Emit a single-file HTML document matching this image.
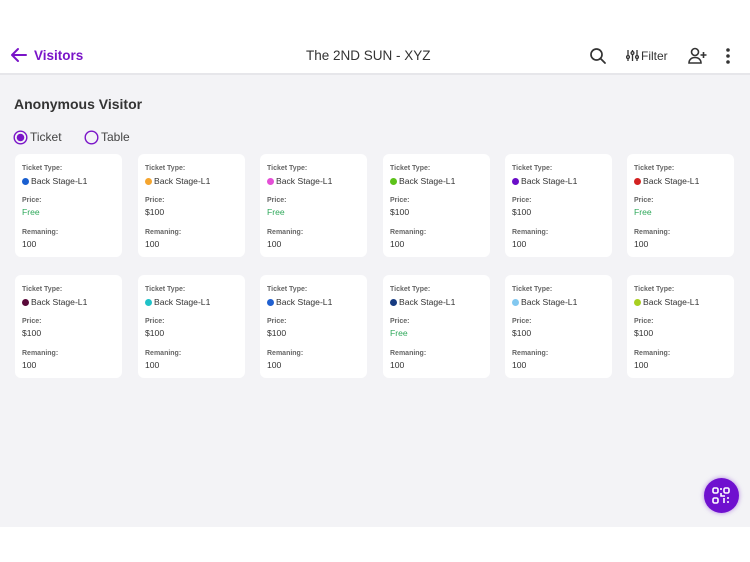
<!DOCTYPE html><html><head><style>
body{margin:0;width:750px;height:562px;position:relative;font-family:"Liberation Sans",sans-serif;background:#fff;overflow:hidden}
.hdr{position:absolute;left:0;top:0;width:750px;height:73px;background:#fff;border-bottom:2px solid #e6e6ea}
.main{position:absolute;left:0;top:75px;width:750px;height:452px;background:#f3f3f6}
.t{position:absolute;white-space:nowrap}
.card{position:absolute;width:107px;height:103px;background:#fff;border-radius:6px}
.card .l{position:absolute;left:7px;font-size:7px;font-weight:bold;color:#666}
.card .v{position:absolute;left:7px;font-size:8.6px;color:#333}
.dot{display:inline-block;width:7px;height:7px;border-radius:50%;margin-right:2px;vertical-align:-0.5px}
.free{color:#2ea85a!important}
</style></head><body>
<div class="hdr">
<svg style="position:absolute;left:10px;top:47px" width="18" height="16" viewBox="0 0 18 16"><path d="M16 8H2M8 2L2 8l6 6" stroke="#7a14c8" stroke-width="2" fill="none" stroke-linecap="round" stroke-linejoin="round"/></svg>
<div class="t" style="left:34px;top:48px;font-size:13.5px;font-weight:bold;color:#7a14c8">Visitors</div>
<div class="t" style="left:306px;top:48px;font-size:13.5px;color:#333">The 2ND SUN - XYZ</div>
<svg style="position:absolute;left:589px;top:47px" width="18" height="18" viewBox="0 0 18 18"><circle cx="7.5" cy="7.5" r="5.5" stroke="#333" stroke-width="1.7" fill="none"/><path d="M11.5 11.5L16 16" stroke="#333" stroke-width="1.8" stroke-linecap="round"/></svg>
<svg style="position:absolute;left:626px;top:49px" width="13" height="13" viewBox="0 0 13 13" stroke="#333" stroke-width="1.3" fill="none"><path d="M2 1v11M6.5 1v11M11 1v11"/><circle cx="2" cy="8" r="1.4" fill="#fff"/><circle cx="6.5" cy="4" r="1.4" fill="#fff"/><circle cx="11" cy="8" r="1.4" fill="#fff"/></svg>
<div class="t" style="left:641px;top:49px;font-size:12px;color:#333">Filter</div>
<svg style="position:absolute;left:688px;top:47px" width="19" height="18" viewBox="0 0 19 18" stroke="#333" stroke-width="1.6" fill="none"><circle cx="7" cy="5" r="3.5"/><path d="M1 16c0-3.5 2.7-5.5 6-5.5s6 2 6 5.5z"/><path d="M15.5 5v6M12.5 8h6"/></svg>
<svg style="position:absolute;left:725px;top:47px" width="6" height="18"><circle cx="3" cy="3" r="1.8" fill="#333"/><circle cx="3" cy="9" r="1.8" fill="#333"/><circle cx="3" cy="15" r="1.8" fill="#333"/></svg>
</div>
<div class="main"></div>
<div class="t" style="left:14px;top:96px;font-size:14px;font-weight:bold;color:#333">Anonymous Visitor</div>
<svg style="position:absolute;left:13px;top:130px" width="15" height="15"><circle cx="7.5" cy="7.5" r="6.3" stroke="#7a14c8" stroke-width="1.4" fill="none"/><circle cx="7.5" cy="7.5" r="3.8" fill="#7a14c8"/></svg>
<div class="t" style="left:30px;top:130px;font-size:12px;color:#444">Ticket</div>
<svg style="position:absolute;left:84px;top:130px" width="15" height="15"><circle cx="7.5" cy="7.5" r="6.3" stroke="#7a14c8" stroke-width="1.4" fill="none"/></svg>
<div class="t" style="left:101px;top:130px;font-size:12px;color:#444">Table</div>
<div id="cards"></div>
<script>
var xs=[15,138,260,383,505,627],ys=[154,275];
var c=[["#1a5fd0","#f5a52e","#e44fd6","#5cc21a","#6a0dc8","#d32222"],["#5a0a3a","#20c2c8","#2060d0","#163a80","#82c8f0","#a8d020"]];
var p=[[1,0,1,0,0,1],[0,0,0,1,0,0]];
var h="";
for(var r=0;r<2;r++)for(var i=0;i<6;i++){
h+='<div class="card" style="left:'+xs[i]+'px;top:'+ys[r]+'px">'+
'<div class="l" style="top:11px">Ticket Type:</div>'+
'<div class="v" style="top:22px"><span class="dot" style="background:'+c[r][i]+'"></span>Back Stage-L1</div>'+
'<div class="l" style="top:43px">Price:</div>'+
'<div class="v'+(p[r][i]?' free':'')+'" style="top:53px">'+(p[r][i]?'Free':'$100')+'</div>'+
'<div class="l" style="top:75px">Remaning:</div>'+
'<div class="v" style="top:85px">100</div></div>';}
document.getElementById("cards").innerHTML=h;
</script>
<div style="position:absolute;left:704px;top:478px;width:35px;height:35px;border-radius:50%;background:#6f10cf;box-shadow:0 0 5px rgba(111,16,207,.5)"></div>
<svg style="position:absolute;left:711px;top:486px" width="20" height="19" viewBox="0 0 20 19" stroke="#fff" stroke-width="1.6" fill="none"><rect x="2" y="2" width="5" height="5" rx="1.5"/><rect x="13" y="2" width="5" height="5" rx="1.5"/><rect x="2" y="12" width="5" height="5" rx="1.5"/><path d="M10 2v2M10 7v3h4M13 12v5M16 12h2M16 16h2"/></svg>
</body></html>
